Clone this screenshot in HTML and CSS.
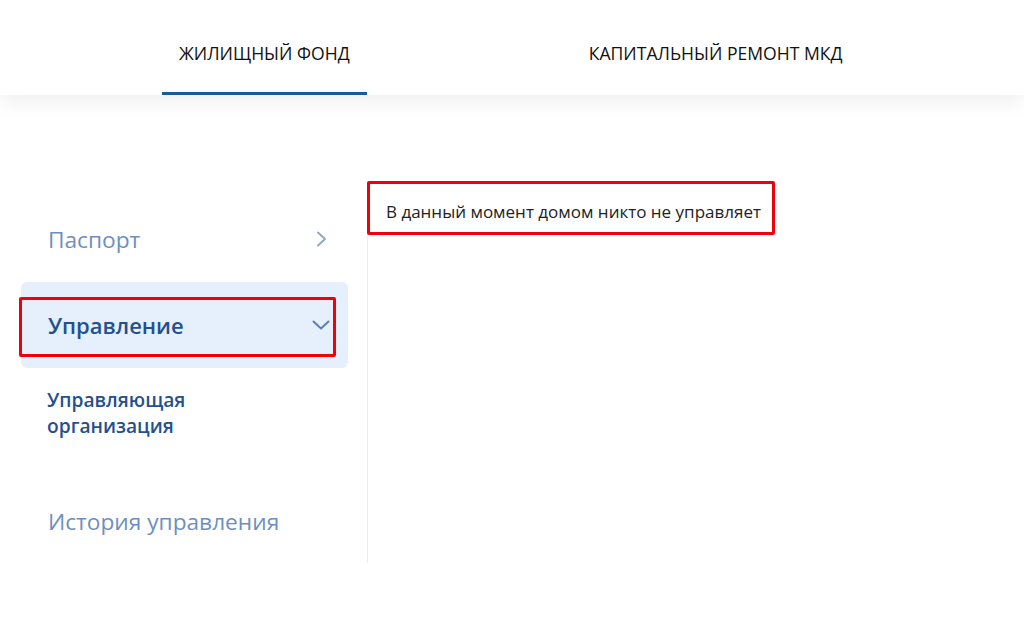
FILE: index.html
```html
<!DOCTYPE html>
<html lang="ru">
<head>
<meta charset="utf-8">
<title>Управление</title>
<link rel="stylesheet" href="styles.css">
</head>
<body>
<header class="topbar">
  <nav class="tabs">
    <a class="tab tab-active">ЖИЛИЩНЫЙ ФОНД</a>
    <a class="tab">КАПИТАЛЬНЫЙ РЕМОНТ МКД</a>
  </nav>
</header>
<main class="page">
  <aside class="sidebar">
    <div class="item">
      <span class="item-label">Паспорт</span>
      <svg class="chev" width="12" height="16" viewBox="0 0 12 16"><path d="M2 1.5 L9 8 L2 14.5" fill="none" stroke="#8fa9cc" stroke-width="2" stroke-linecap="round" stroke-linejoin="round"/></svg>
    </div>
    <div class="item item-active">
      <span class="item-label">Управление</span>
      <svg class="chev" width="18" height="11" viewBox="0 0 18 11"><path d="M1.5 1.5 L9 8.5 L16.5 1.5" fill="none" stroke="#5b7fb3" stroke-width="2" stroke-linecap="round" stroke-linejoin="round"/></svg>
    </div>
    <div class="subitem">Управляющая<br>организация</div>
    <div class="item">
      <span class="item-label">История управления</span>
    </div>
  </aside>
  <section class="content">
    <div class="notice">В данный момент домом никто не управляет</div>
  </section>
</main>
</body>
</html>
```
FILE: styles.css
```css
* { box-sizing: border-box; }
html, body { margin: 0; padding: 0; background: #fff; }
body { font-family: "Open Sans", "Liberation Sans", sans-serif; color: #222; }

.topbar {
  height: 95px;
  background: #fff;
  box-shadow: 0 6px 22px rgba(0, 0, 0, 0.07);
  position: relative;
  z-index: 1;
}
.tabs {
  display: flex;
  height: 95px;
  padding-left: 162px;
  gap: 205px;
}
.tab {
  display: flex;
  align-items: center;
  padding: 14px 17px 0;
  font-size: 17.6px;
  font-weight: 500;
  color: #111;
  border-bottom: 3px solid transparent;
}
.tab-active { border-bottom-color: #1a5b9b; }

.page {
  display: flex;
  padding-top: 86px;
}
.sidebar {
  margin-left: 21px;
  width: 347px;
  padding-right: 19px;
  padding-top: 15px;
  border-right: 1px solid #ececec;
  height: 382px;
}
.item {
  position: relative;
  display: flex;
  align-items: center;
  justify-content: space-between;
  height: 86px;
  padding: 0 20px 0 27px;
  border-radius: 6px;
  font-size: 22.7px;
  color: #6e8fbe;
}
.item-active {
  background: #e6f0fc;
  color: #24508f;
  font-size: 22px;
}
.item-active .item-label { font-weight: 600; }
.item-active::after {
  content: "";
  position: absolute;
  left: -2px;
  right: 12px;
  top: 15px;
  bottom: 11px;
  border: 3px solid #f0000a;
  border-radius: 2px;
}
.chev { display: block; }
.item-active .chev { margin-right: -2px; }

.subitem {
  height: 110px;
  padding: 19px 0 0 26px;
  font-size: 19.2px;
  line-height: 26px;
  font-weight: 600;
  color: #24508f;
}

.content { flex: 1; }
.notice {
  margin-left: -1px;
  width: 408px;
  height: 54px;
  border: 3px solid #f0000a;
  border-radius: 2px;
  display: flex;
  align-items: center;
  padding-left: 16px;
  padding-top: 6px;
  font-size: 17px;
  color: #222;
  position: relative;
  z-index: 1;
  background: #fff;
}
```
